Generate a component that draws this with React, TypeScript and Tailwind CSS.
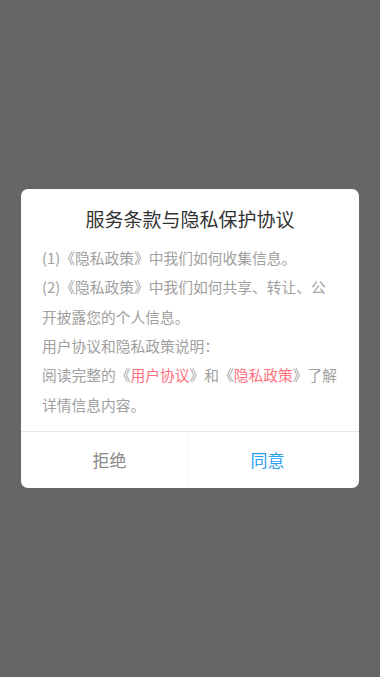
export default function App() {
  return (
    <div
      className="min-h-screen w-full bg-[#666666] flex items-center justify-center"
      style={{ fontFamily: '"Noto Sans CJK SC", "Noto Sans", sans-serif' }}
    >
      <div className="w-[338px] bg-white rounded-[7px] overflow-hidden">
        <h2 className="pt-[16px] text-center text-[19px] leading-[28px] text-[#333333] font-normal">
          服务条款与隐私保护协议
        </h2>
        <div className="pl-[21px] pr-[21px] pt-[10px] pb-[12px] text-[14.75px] leading-[29.4px] text-[#a0a0a0] font-normal">
          <p>(1)《隐私政策》中我们如何收集信息。</p>
          <p>(2)《隐私政策》中我们如何共享、转让、公开披露您的个人信息。</p>
          <p>用户协议和隐私政策说明：</p>
          <p>
            阅读完整的《<span className="text-[#ff6f7d]">用户协议</span>》和《<span className="text-[#ff6f7d]">隐私政策</span>》了解详情信息内容。
          </p>
        </div>
        <div className="flex border-t border-[#e8e8e8] h-[57px]">
          <button className="flex-1 flex items-center justify-center pl-[10px] text-[17px] text-[#8a8a8a] font-normal border-r border-[#f4f4f4]">
            拒绝
          </button>
          <button className="flex-1 flex items-center justify-center pr-[13px] text-[17px] text-[#2aa0f0] font-normal">
            同意
          </button>
        </div>
      </div>
    </div>
  );
}
